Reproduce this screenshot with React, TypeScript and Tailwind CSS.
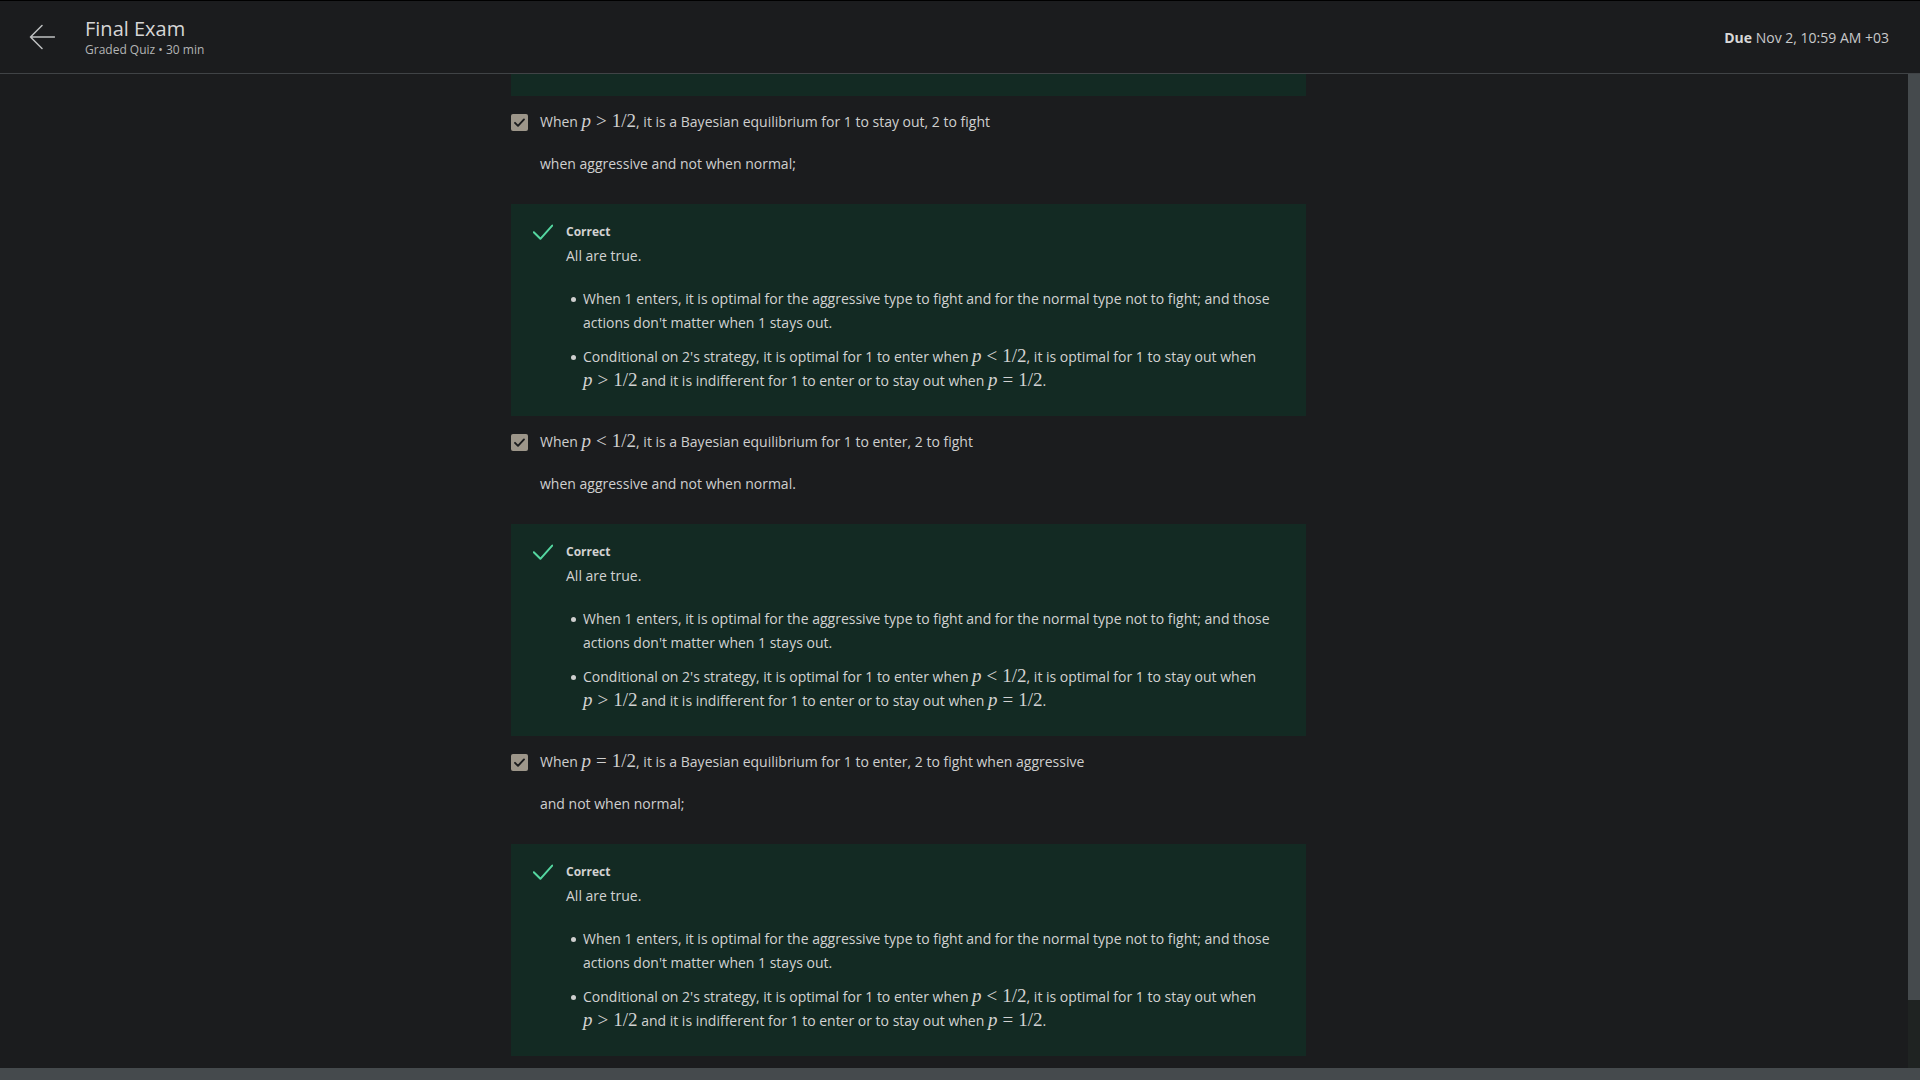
import { ReactNode } from 'react';

const mathCls = "font-['Liberation_Serif',serif] text-[19px] leading-none";

function M({ op }: { op: '>' | '<' | '=' }) {
  return (
    <span className={mathCls}>
      <i>p</i>
      <span className="mx-[5px]">{op}</span>1/2
    </span>
  );
}

function CheckBox() {
  return (
    <span className="flex h-[17px] w-[17px] shrink-0 items-center justify-center rounded-[2px] bg-[#9d968a]">
      <svg width="13" height="13" viewBox="0 0 13 13" fill="none">
        <path d="M2 6.8l3 3 6-6.4" stroke="#1b1c1e" strokeWidth="1.9" strokeLinecap="round" strokeLinejoin="round" />
      </svg>
    </span>
  );
}

function Option({ first, second }: { first: ReactNode; second: string }) {
  return (
    <div className="pt-[14px] pb-[28px] text-[14px] text-[#cfcfcf]">
      <div className="flex h-6 items-center gap-3 leading-6">
        <CheckBox />
        <span className="whitespace-nowrap">{first}</span>
      </div>
      <div className="mt-[18px] pl-[29px] leading-6">{second}</div>
    </div>
  );
}

function Feedback() {
  return (
    <div className="h-[212px] bg-[#132a23] pl-[22px] pr-[22px] pt-[18px] text-[#d2d2d2]">
      <div className="flex items-start gap-[13px]">
        <svg width="20" height="20" viewBox="0 0 20 20" fill="none" className="shrink-0">
          <path d="M0.8 10.2l6.6 6.6L19.2 3.6" stroke="#54d6a0" strokeWidth="2" strokeLinecap="round" strokeLinejoin="round" />
        </svg>
        <div className="flex-1">
          <div className="text-[12px] font-bold leading-5">Correct</div>
          <div className="mt-[2px] text-[14px] leading-6">All are true.</div>
          <ul className="mt-[19px] flex flex-col gap-[10px] text-[14px] leading-6">
            <li className="flex">
              <span className="mt-[9.5px] ml-[5px] mr-[7px] h-[5px] w-[5px] shrink-0 rounded-full bg-[#cfcfcf]" />
              <span className="whitespace-nowrap">
                When 1 enters, it is optimal for the aggressive type to fight and for the normal type not to fight; and those
                <br />
                actions don't matter when 1 stays out.
              </span>
            </li>
            <li className="flex">
              <span className="mt-[9.5px] ml-[5px] mr-[7px] h-[5px] w-[5px] shrink-0 rounded-full bg-[#cfcfcf]" />
              <span className="whitespace-nowrap">
                Conditional on 2's strategy, it is optimal for 1 to enter when <M op="<" />, it is optimal for 1 to stay out when
                <br />
                <M op=">" /> and it is indifferent for 1 to enter or to stay out when <M op="=" />.
              </span>
            </li>
          </ul>
        </div>
      </div>
    </div>
  );
}

export default function App() {
  return (
    <div className="flex h-screen w-full flex-col overflow-hidden bg-[#1b1c1e] font-['Open_Sans',sans-serif]">
      <header className="flex h-[74px] shrink-0 items-center border-t border-b border-t-black border-b-[#404346] pl-[29px] pr-[31px]">
        <svg width="26" height="26" viewBox="0 0 26 26" fill="none" className="shrink-0">
          <path d="M1.5 13h24M13 1.5L1.5 13 13 24.5" stroke="#bfc0c1" strokeWidth="1.5" strokeLinecap="round" strokeLinejoin="round" />
        </svg>
        <div className="ml-[30px] flex flex-col">
          <h1 className="text-[20px] leading-[26px] text-[#d6d6d6]">Final Exam</h1>
          <p className="text-[12px] leading-4 text-[#b3b4b5]">Graded Quiz • 30 min</p>
        </div>
        <div className="ml-auto text-[14px] text-[#c8c9ca]">
          <span className="font-bold text-[#d8d8d8]">Due</span> Nov 2, 10:59 AM +03
        </div>
      </header>

      <div className="flex min-h-0 flex-1">
        <main className="min-w-0 flex-1 overflow-hidden">
          <div className="ml-[511px] w-[795px]">
            <div className="h-[22px] bg-[#132a23]" />
            <Option
              first={<>When <M op=">" />, it is a Bayesian equilibrium for 1 to stay out, 2 to fight</>}
              second="when aggressive and not when normal;"
            />
            <Feedback />
            <Option
              first={<>When <M op="<" />, it is a Bayesian equilibrium for 1 to enter, 2 to fight</>}
              second="when aggressive and not when normal."
            />
            <Feedback />
            <Option
              first={<>When <M op="=" />, it is a Bayesian equilibrium for 1 to enter, 2 to fight when aggressive</>}
              second="and not when normal;"
            />
            <Feedback />
          </div>
        </main>
        <div className="flex w-3 shrink-0 flex-col">
          <div className="h-[926px] bg-[#454a4d]" />
          <div className="flex-1 bg-[#1f2322]" />
        </div>
      </div>
      <div className="h-3 shrink-0 bg-[#454a4d]" />
    </div>
  );
}
